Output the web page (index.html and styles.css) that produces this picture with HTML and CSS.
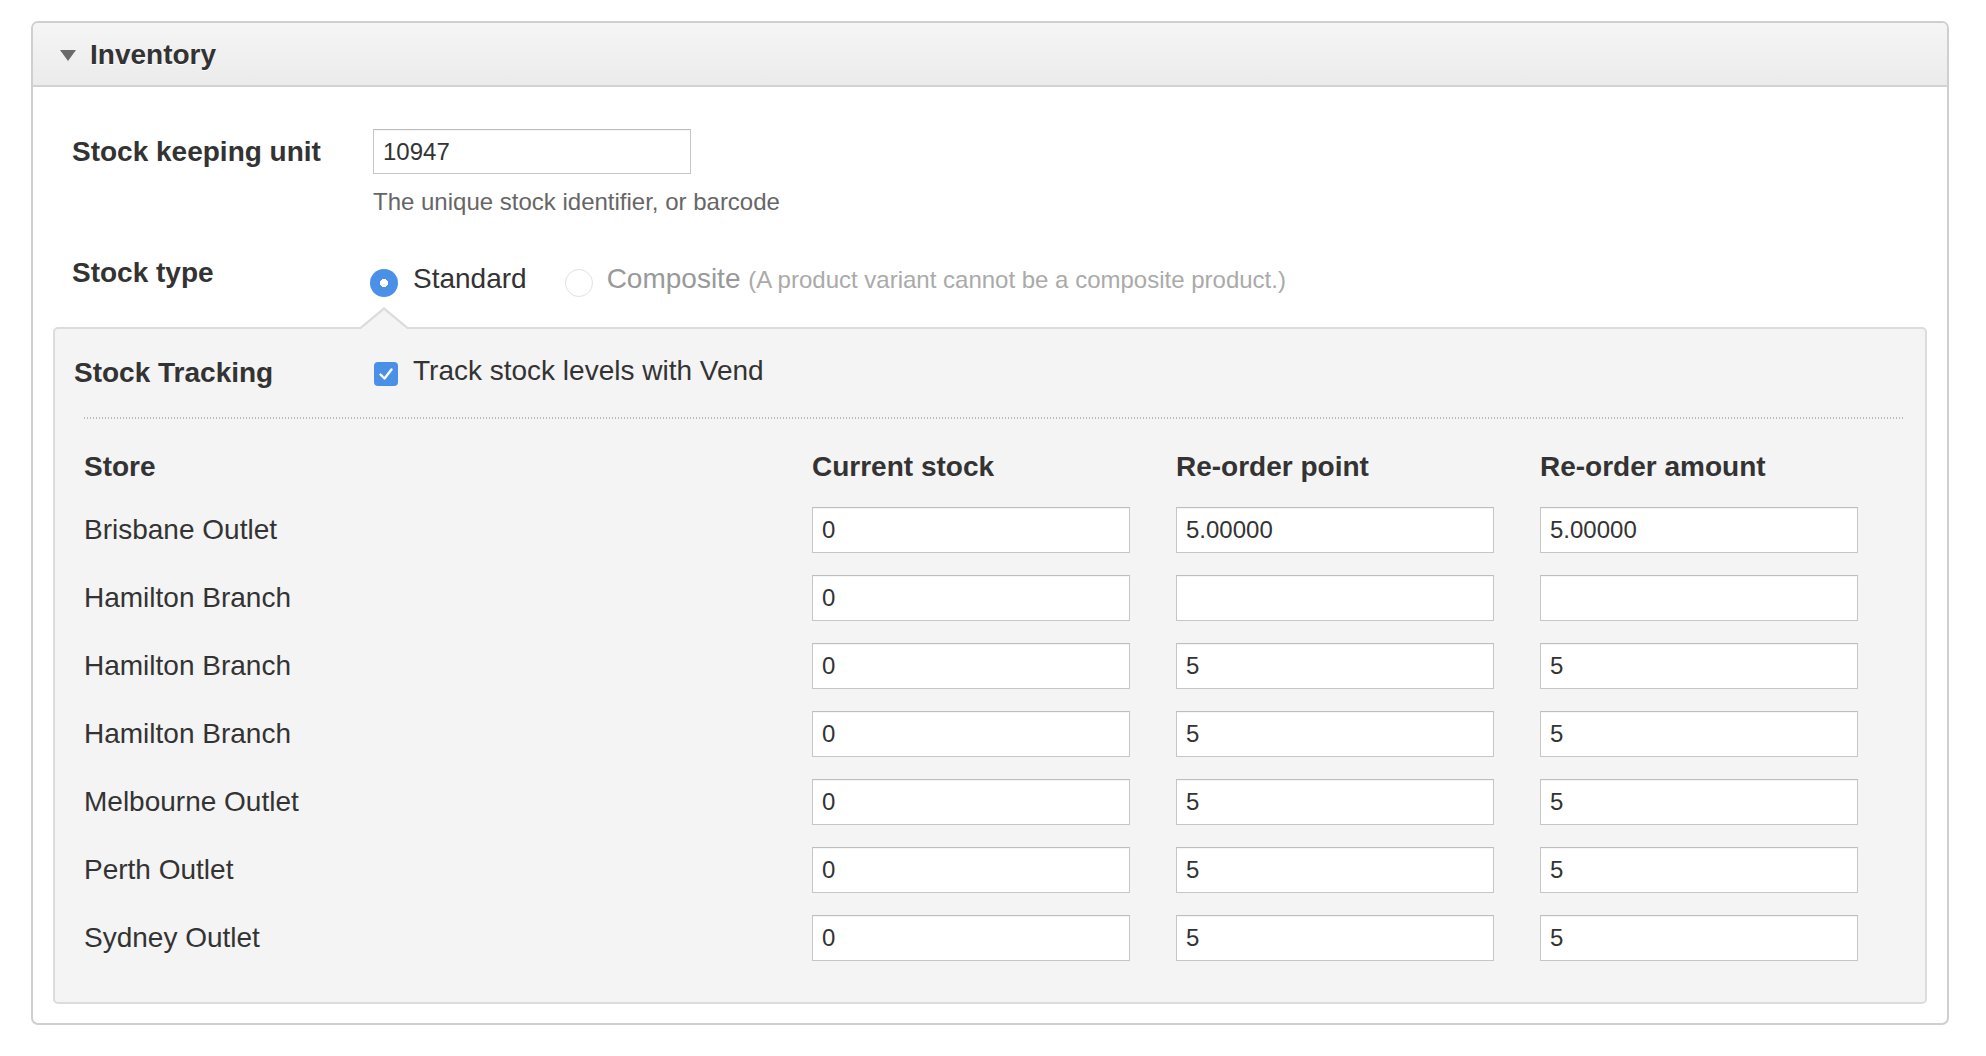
FILE: index.html
```html
<!DOCTYPE html>
<html lang="en">
<head>
<meta charset="utf-8">
<title>Inventory</title>
<link rel="stylesheet" href="styles.css">
</head>
<body>
<section class="panel">
  <header class="panel-head">
    <span class="caret"></span>
    <h2 class="panel-title">Inventory</h2>
  </header>
  <div class="panel-body">
    <div class="field field-sku">
      <label class="lbl" for="sku">Stock keeping unit</label>
      <div class="ctrl">
        <input class="text sku-input" id="sku" type="text" value="10947">
        <p class="help">The unique stock identifier, or barcode</p>
      </div>
    </div>
    <div class="field field-type">
      <span class="lbl">Stock type</span>
      <div class="ctrl radios">
        <span class="radio radio-on"></span>
        <span class="opt">Standard</span>
        <span class="radio radio-off"></span>
        <span class="opt opt-muted">Composite <small class="note">(A product variant cannot be a composite product.)</small></span>
      </div>
    </div>
    <div class="tracking">
      <div class="track-row">
        <span class="lbl">Stock Tracking</span>
        <div class="ctrl check-ctrl">
          <span class="checkbox"><svg viewBox="0 0 24 24" width="24" height="24"><path d="M6.5 12.5 L10.5 16.5 L17.5 7.5" fill="none" stroke="#fff" stroke-width="2.4" stroke-linecap="round" stroke-linejoin="round"/></svg></span>
          <span class="opt">Track stock levels with Vend</span>
        </div>
      </div>
      <div class="dots"></div>
      <div class="stock-table">
        <div class="th">Store</div>
        <div class="th">Current stock</div>
        <div class="th">Re-order point</div>
        <div class="th">Re-order amount</div>

        <div class="td">Brisbane Outlet</div>
        <input class="text cell" type="text" value="0">
        <input class="text cell" type="text" value="5.00000">
        <input class="text cell" type="text" value="5.00000">

        <div class="td">Hamilton Branch</div>
        <input class="text cell" type="text" value="0">
        <input class="text cell" type="text" value="">
        <input class="text cell" type="text" value="">

        <div class="td">Hamilton Branch</div>
        <input class="text cell" type="text" value="0">
        <input class="text cell" type="text" value="5">
        <input class="text cell" type="text" value="5">

        <div class="td">Hamilton Branch</div>
        <input class="text cell" type="text" value="0">
        <input class="text cell" type="text" value="5">
        <input class="text cell" type="text" value="5">

        <div class="td">Melbourne Outlet</div>
        <input class="text cell" type="text" value="0">
        <input class="text cell" type="text" value="5">
        <input class="text cell" type="text" value="5">

        <div class="td">Perth Outlet</div>
        <input class="text cell" type="text" value="0">
        <input class="text cell" type="text" value="5">
        <input class="text cell" type="text" value="5">

        <div class="td">Sydney Outlet</div>
        <input class="text cell" type="text" value="0">
        <input class="text cell" type="text" value="5">
        <input class="text cell" type="text" value="5">
      </div>
    </div>
  </div>
</section>
</body>
</html>
```

FILE: styles.css
```css
* { box-sizing: border-box; }

html, body {
  background: #ffffff;
}

body {
  margin: 0;
  padding: 21px 37px 0 31px;
  font-family: "Liberation Sans", Arial, Helvetica, sans-serif;
  font-size: 28px;
  color: #333333;
}

.panel {
  width: 1918px;
  border: 2px solid #cfcfcf;
  border-radius: 7px;
  background: #ffffff;
}

.panel-head {
  display: flex;
  align-items: center;
  height: 64px;
  padding-left: 27px;
  padding-top: 2px;
  border-bottom: 2px solid #d2d2d2;
  border-radius: 5px 5px 0 0;
  background: linear-gradient(#f5f5f5, #ebebeb);
}

.caret {
  width: 0;
  height: 0;
  border-left: 8px solid transparent;
  border-right: 8px solid transparent;
  border-top: 11px solid #6a6a6a;
  margin-right: 14px;
}

.panel-title {
  margin: 0;
  font-size: 28px;
  font-weight: bold;
  color: #333333;
  text-shadow: 0 1px 0 #ffffff;
}

.panel-body {
  padding: 42px 20px 19px 20px;
}

.field {
  display: grid;
  grid-template-columns: 301px 1fr;
  padding-left: 19px;
}

.lbl {
  font-weight: bold;
  font-size: 28px;
  line-height: 45px;
  color: #333333;
}

.text {
  font-family: "Liberation Sans", Arial, Helvetica, sans-serif;
  font-size: 24px;
  color: #333333;
  border: 1px solid #c6c6c6;
  border-top-color: #bdbdbd;
  background: #ffffff;
  padding: 0 9px;
  margin: 0;
  outline: none;
  border-radius: 0;
  box-shadow: inset 0 1px 1px rgba(0, 0, 0, 0.04);
}

.sku-input {
  display: block;
  width: 318px;
  height: 45px;
}

.help {
  margin: 11px 0 0 0;
  font-size: 24px;
  line-height: 34px;
  color: #666666;
}

.field-type {
  margin-top: 31px;
}

.radios {
  display: flex;
  align-items: center;
  height: 45px;
  margin-top: 3px;
  padding-top: 6px;
}

.radio {
  flex: none;
  width: 28px;
  height: 28px;
  border-radius: 50%;
  margin-top: 9px;
}

.radio-on {
  margin-left: -3px;
  margin-right: 15px;
  background: radial-gradient(circle, #ffffff 0 3.8px, #4a90e6 4.3px);
}

.radio-off {
  margin-left: 38px;
  margin-right: 14px;
  background: #ffffff;
  border: 1px solid #e2e2e2;
}

.opt {
  font-size: 28px;
  line-height: 45px;
  white-space: nowrap;
}

.opt-muted {
  color: #999999;
}

.note {
  font-size: 24px;
  color: #aaaaaa;
}

.tracking {
  position: relative;
  margin-top: 29px;
  background: #f4f4f4;
  border: 2px solid #dcdcdc;
  border-radius: 5px;
  padding: 21px 20px 41px 19px;
}

.tracking::before {
  content: "";
  position: absolute;
  left: 305px;
  top: -22px;
  width: 0;
  height: 0;
  border-left: 24px solid transparent;
  border-right: 24px solid transparent;
  border-bottom: 20px solid #dcdcdc;
}

.tracking::after {
  content: "";
  position: absolute;
  left: 306px;
  top: -19px;
  width: 0;
  height: 0;
  border-left: 23px solid transparent;
  border-right: 23px solid transparent;
  border-bottom: 19px solid #f4f4f4;
}

.track-row {
  display: grid;
  grid-template-columns: 300px 1fr;
}

.check-ctrl {
  display: flex;
  align-items: center;
  height: 45px;
}

.check-ctrl .opt {
  margin-top: -4px;
}

.checkbox {
  flex: none;
  width: 24px;
  height: 24px;
  border-radius: 4px;
  background: #4a90e6;
  margin-right: 15px;
  margin-top: 3px;
  display: flex;
}

.checkbox svg {
  display: block;
}

.dots {
  margin: 22px 0 28px 10px;
  height: 2px;
  background: repeating-linear-gradient(to right, #bababa 0 1.5px, transparent 1.5px 3px);
}

.stock-table {
  margin-left: 10px;
  display: grid;
  grid-template-columns: 682px 318px 318px 318px;
  grid-auto-rows: 46px;
  grid-template-rows: 38px;
  column-gap: 46px;
  row-gap: 22px;
}

.th {
  font-weight: bold;
  font-size: 28px;
  line-height: 39px;
  white-space: nowrap;
}

.td {
  font-size: 28px;
  line-height: 46px;
  white-space: nowrap;
}

.cell {
  width: 318px;
  height: 46px;
}
```
